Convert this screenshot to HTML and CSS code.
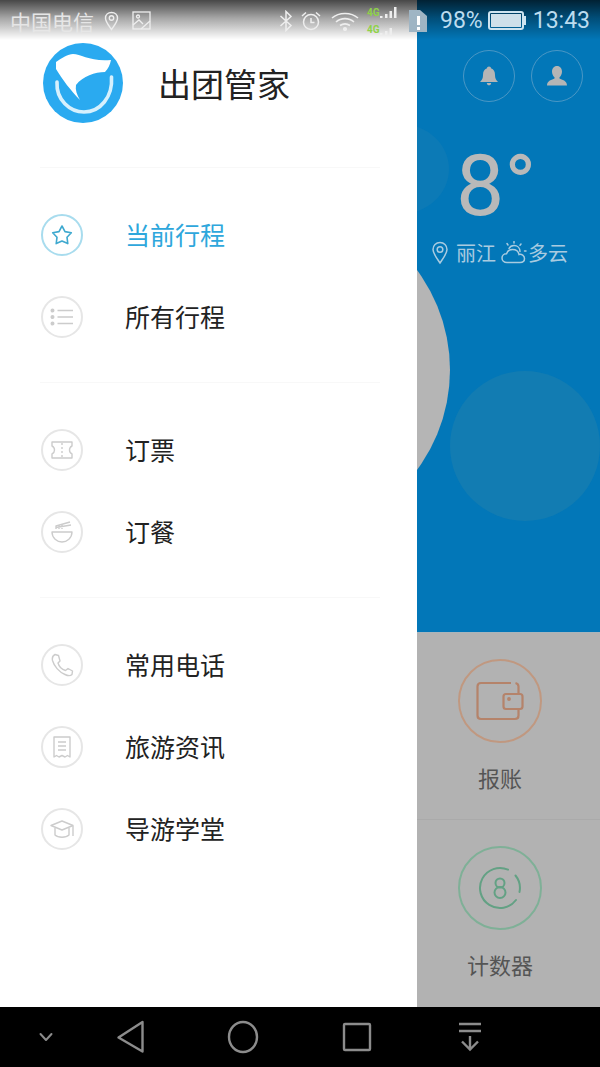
FILE: index.html
```html
<!DOCTYPE html>
<html lang="zh-CN">
<head>
    <meta charset="UTF-8">
    <title>出团管家</title>
    <link rel="stylesheet" href="styles.css">
</head>
<body>
    <div id="screen">
        <div id="main">
            <!-- drawer -->
            <div id="drawer">
                <div class="head">
                    <svg class="logo" width="80" height="80" viewBox="0 0 80 80">
                        <circle cx="40" cy="40" r="40" fill="#2aaaf0"/>
                        <path d="M13 19C19 15 25 11 30 11C38 11 48 19 68 17C67 22 65 26 62 29C52 29 40 33 33 42C32 47 34 52 37 57C28 48 19 36 13 26Z" fill="#fff"/>
                        <path d="M14 39C13 57 27 69 41 69C57 69 70 54 68.500 34" fill="none" stroke="#d6f0fd" stroke-width="3.600" stroke-linecap="round"/>
                    </svg>
                    <div class="title">出团管家</div>
                </div>
                <div class="group">
                    <div class="item active">
                        <span class="ico">
                            <svg width="24" height="24" viewBox="0 0 24 24" fill="none" stroke="#3fa9cf" stroke-width="1.6" stroke-linejoin="round"><path d="M12 3L15 8.6L21.3 9.8L17 14.3L17.8 20.6L12 18L6.200 20.6L7 14.3L2.700 9.800L9 8.600Z"/></svg>
                        </span>
                        <span class="name">当前行程</span>
                    </div>
                    <div class="item">
                        <span class="ico">
                            <svg width="24" height="24" viewBox="0 0 24 24" fill="none" stroke="#ccc" stroke-width="1.4"><path d="M7.500 5.500H23M7.500 12H23M7.500 18.500H23"/><circle cx="2.500" cy="5.500" r="1.300" fill="#ccc"/><circle cx="2.500" cy="12" r="1.300" fill="#ccc"/><circle cx="2.500" cy="18.500" r="1.300" fill="#ccc"/></svg>
                        </span>
                        <span class="name">所有行程</span>
                    </div>
                </div>
                <div class="group">
                    <div class="item">
                        <span class="ico">
                            <svg width="24" height="24" viewBox="0 0 24 24" fill="none" stroke="#ccc" stroke-width="1.4" stroke-linejoin="round"><path d="M2 4H22V8C20 9 19.500 11 19.500 12C19.500 13 20 15 22 16V20H2V16C4 15 4.500 13 4.500 12C4.500 11 4 9 2 8Z"/><path d="M12 5V19" stroke-dasharray="2 2"/></svg>
                        </span>
                        <span class="name">订票</span>
                    </div>
                    <div class="item">
                        <span class="ico">
                            <svg width="24" height="24" viewBox="0 0 24 24" fill="none" stroke="#ccc" stroke-width="1.4" stroke-linejoin="round"><path d="M2 12H22C22 18 17 22 12 22C7 22 2 18 2 12Z"/><path d="M6 9V6L20 2M9 9V5.500M12 9V5M6 7.500L21 5"/></svg>
                        </span>
                        <span class="name">订餐</span>
                    </div>
                </div>
                <div class="group last">
                    <div class="item">
                        <span class="ico">
                            <svg width="24" height="24" viewBox="0 0 24 24" fill="none" stroke="#ccc" stroke-width="1.4" stroke-linejoin="round"><path d="M5 1.500L8.500 2.500L10 8L8 10C9 13.500 12 16.500 15.500 17.500L18 15.500L22.500 18L22 21.500C20.500 23 18 23 15 21.500C9 19 4 13 2.500 7.500C2 5 3 2.500 5 1.500Z"/></svg>
                        </span>
                        <span class="name">常用电话</span>
                    </div>
                    <div class="item">
                        <span class="ico">
                            <svg width="24" height="24" viewBox="0 0 24 24" fill="none" stroke="#ccc" stroke-width="1.4" stroke-linejoin="round"><path d="M4 2H20V22L17.500 20.500L15 22L12 20.500L9 22L6.500 20.500L4 22Z"/><path d="M8 7H16M8 11H16M8 15H16"/></svg>
                        </span>
                        <span class="name">旅游资讯</span>
                    </div>
                    <div class="item">
                        <span class="ico">
                            <svg width="24" height="24" viewBox="0 0 24 24" fill="none" stroke="#ccc" stroke-width="1.4" stroke-linejoin="round"><path d="M12 4L23 8.500L12 13L1 8.500Z"/><path d="M5 11V18C8 21 16 21 19 18V11"/><path d="M23 9V19"/></svg>
                        </span>
                        <span class="name">导游学堂</span>
                    </div>
                </div>
            </div>
            <!-- page behind the drawer -->
            <div id="behind">
                <div class="top">
                    <span class="bubble b1"></span>
                    <span class="bubble b2"></span>
                    <span class="bubble b3"></span>
                    <div class="btns">
                        <span class="round">
                            <svg width="22" height="22" viewBox="0 0 22 22" fill="#b5b5b5"><path d="M11 1.500C12.200 1.500 13 2.300 13 3.300C15.800 4.200 17 6.500 17 10C17 13.500 18 15 20 17H2C4 15 5 13.500 5 10C5 6.500 6.200 4.200 9 3.300C9 2.300 9.800 1.500 11 1.500Z"/><path d="M8.800 18H13.200C13 19.500 12.200 20.300 11 20.300C9.800 20.300 9 19.500 8.800 18Z"/></svg>
                        </span>
                        <span class="round">
                            <svg width="24" height="24" viewBox="0 0 24 24" fill="#b5b5b5"><path d="M12 2C15.200 2 17 4.500 17 7.500C17 10 16 12 14.500 13.200V14.500C17 15.800 22 16.500 22 21.500H2C2 16.500 7 15.800 9.500 14.500V13.200C8 12 7 10 7 7.500C7 4.500 8.800 2 12 2Z"/></svg>
                        </span>
                    </div>
                    <div class="temp">8°</div>
                    <div class="weather">
                        <svg width="18" height="24" viewBox="0 0 18 24" fill="none" stroke="#a9cbe0" stroke-width="1.500"><path d="M9 22C5 16 2 12.500 2 8.500C2 4.500 5 1.500 9 1.500C13 1.500 16 4.500 16 8.500C16 12.500 13 16 9 22Z"/><circle cx="9" cy="8.500" r="2.800"/></svg>
                        <span>丽江</span>
                        <svg width="27" height="24" viewBox="0 0 27 24" fill="none" stroke="#a9cbe0" stroke-width="1.500" stroke-linecap="round"><path d="M6 21.500C3 21.500 1 19.500 1 17C1 14.500 3 12.800 5.500 12.800C6.500 9.800 9 8.500 11.500 8.500C15 8.500 17.500 10.500 18 13.500C20.500 12.800 23.500 14.500 23.500 17.500C23.500 20 21.500 21.500 19 21.500Z"/><path d="M8 7.500C9 5.500 11 4.500 13 4.500C16.500 4.500 19 7 19 10.500M13 0.500V2M20 3L19 4.200M25 10H23.500M6 2.500L7 4"/></svg>
                        <span>多云</span>
                    </div>
                </div>
                <div class="tools">
                    <div class="tool">
                        <span class="tool-ico orange">
                            <svg width="48" height="40" viewBox="0 0 48 40" fill="none" stroke="#b5836a" stroke-width="2.200"><path d="M35 2H5C2.800 2 1.500 3.300 1.500 5.500V34.500C1.500 36.700 2.800 38 5 38H39C41.200 38 42.500 36.700 42.500 34.500V28M42.500 12V5.500C42.500 4 41.500 2.500 39.500 2"/><rect x="27.500" y="13" width="19" height="15" rx="2.500"/><circle cx="33" cy="18" r="0.800" fill="#b5836a"/></svg>
                        </span>
                        <div class="tool-name">报账</div>
                    </div>
                    <div class="tool">
                        <span class="tool-ico green">
                            <svg width="44" height="44" viewBox="0 0 44 44" fill="none" stroke="#63a184" stroke-width="2"><path d="M30 3.700A20 20 0 1 0 38 34M37.500 9.500A20 20 0 0 1 41.500 26" stroke-linecap="round"/><circle cx="22" cy="17" r="4.500"/><circle cx="22" cy="26.500" r="5.500"/></svg>
                        </span>
                        <div class="tool-name">计数器</div>
                    </div>
                </div>
            </div>
        </div>
        <!-- nav bar -->
        <div id="nav">
            <svg width="16" height="10" viewBox="0 0 16 10" fill="none" stroke="#8c8c8c" stroke-width="2" stroke-linecap="round" stroke-linejoin="round"><path d="M2.500 2L8 8L13.500 2"/></svg>
            <svg class="back" width="30" height="34" viewBox="0 0 30 34" fill="none" stroke="#8c8c8c" stroke-width="2.400" stroke-linejoin="round"><path d="M26.500 2V31.500L2.500 17.500Z"/></svg>
            <svg class="home" width="32" height="34" viewBox="0 0 32 34" fill="none" stroke="#8c8c8c" stroke-width="2.400"><ellipse cx="16" cy="17" rx="14" ry="15"/></svg>
            <svg class="recent" width="30" height="30" viewBox="0 0 30 30" fill="none" stroke="#8c8c8c" stroke-width="2.400" stroke-linejoin="round"><rect x="2" y="2" width="26" height="26" rx="1"/></svg>
            <svg class="pull" width="24" height="30" viewBox="0 0 24 30" fill="none" stroke="#8c8c8c" stroke-width="2.400"><path d="M1 2H23M1 9H23M12 14V27M4 19.500L12 27.500L20 19.500"/></svg>
        </div>
        <!-- status bar lies over the page -->
        <div id="status">
            <div class="side">
                <span class="carrier">中国电信</span>
                <svg width="15" height="20" viewBox="0 0 15 20" fill="none" stroke="#eee" stroke-width="1.400"><path d="M7.500 18.500C4 13.500 1.500 10.500 1.500 7.200C1.500 3.800 4 1.500 7.500 1.500C11 1.500 13.500 3.800 13.500 7.200C13.500 10.500 11 13.500 7.500 18.500Z"/><circle cx="7.500" cy="7" r="2.200"/></svg>
                <svg class="pic" width="19" height="19" viewBox="0 0 19 19" fill="none" stroke="#eee" stroke-width="1.300"><rect x="1" y="1" width="17" height="17"/><path d="M1 14L7 9L11 13M9 18L18 10"/><circle cx="6" cy="5.500" r="1.500"/></svg>
            </div>
            <div class="side">
                <svg width="14" height="22" viewBox="0 0 14 22" fill="none" stroke="#eee" stroke-width="1.500"><path d="M1.500 6L12 15.500L7 20.500V1.500L12 6.500L1.500 16"/></svg>
                <svg class="alarm" width="20" height="20" viewBox="0 0 20 20" fill="none" stroke="#eee" stroke-width="1.500"><circle cx="10" cy="11" r="7.500"/><path d="M10 7V11.500H13.500M1 5L5 1.500M19 5L15 1.500"/></svg>
                <svg class="wifi" width="28" height="20" viewBox="0 0 28 20" fill="none" stroke="#eee" stroke-width="1.600"><path d="M1 7C8 1 20 1 27 7M5 11C10 6.500 18 6.500 23 11M9 14.500C12 12.500 16 12.500 19 14.500"/><circle cx="14" cy="18" r="1.300" fill="#eee"/></svg>
                <span class="signal">
                    <span class="net">4G</span>
                    <span class="net low">4G</span>
                    <svg width="18" height="32" viewBox="0 0 18 32" fill="#eee"><rect x="0" y="11" width="2.500" height="2"/><rect x="5" y="9" width="2.500" height="4"/><rect x="9.500" y="6" width="2.500" height="7"/><rect x="14" y="2" width="2.500" height="11"/><rect x="0" y="28" width="2.500" height="2"/><rect x="5" y="26" width="2.500" height="4"/><rect x="9.500" y="23" width="2.500" height="7"/></svg>
                </span>
                <svg class="sim" width="20" height="24" viewBox="0 0 20 24"><path d="M1 1H12L19 7V23H1Z" fill="#9fb5c4"/><rect x="9" y="7" width="3" height="9" fill="#fff"/><rect x="9" y="18" width="3" height="3" fill="#fff"/></svg>
                <span class="pct">98%</span>
                <span class="batt"><i></i></span>
                <span class="time">13:43</span>
            </div>
        </div>
    </div>
</body>
</html>
```

FILE: styles.css
```css
*{
    margin: 0;
    padding: 0;
    box-sizing: border-box;
}
body{
    width: 600px;
    height: 1067px;
    overflow: hidden;
    font-family: "Noto Sans CJK SC", "Liberation Sans", sans-serif;
}
svg{
    display: block;
    flex: none;
}
#screen{
    width: 600px;
    height: 1067px;
    position: relative;
    display: flex;
    flex-direction: column;
    overflow: hidden;
}
#main{
    height: 1007px;
    display: flex;
}

/* drawer */
#drawer{
    width: 417px;
    flex: none;
    background: #fff;
    position: relative;
    z-index: 1;
}
.head{
    height: 168px;
    padding: 43px 0 0 3px;
    display: flex;
    align-items: flex-start;
    margin: 0 37px 0 40px;
    border-bottom: 1px solid #f8f8f8;
}
.title{
    margin-left: 35px;
    height: 80px;
    line-height: 80px;
    font-size: 33px;
    color: #222;
}
.group{
    padding: 26px 0 24px 1px;
    margin: 0 37px 0 40px;
    border-bottom: 1px solid #f8f8f8;
}
.group.last{
    border-bottom: 0;
}
.item{
    height: 82px;
    display: flex;
    align-items: center;
}
.ico{
    width: 42px;
    height: 42px;
    border: 2px solid #e6e6e6;
    border-radius: 50%;
    display: flex;
    align-items: center;
    justify-content: center;
    margin-right: 42px;
}
.name{
    font-size: 25px;
    margin-top: -2px;
    color: #222;
}
.item.active .ico{
    border-color: #a8dcee;
}
.item.active .name{
    color: #2ea7dc;
}

/* page behind */
#behind{
    flex: 1;
    display: flex;
    flex-direction: column;
}
.top{
    height: 632px;
    flex: none;
    background: #0277b8;
    position: relative;
    overflow: hidden;
    padding-top: 50px;
}
.bubble{
    position: absolute;
    border-radius: 50%;
}
.b1{
    left: -65px;
    top: 124px;
    width: 97px;
    height: 90px;
    background: #0c7ab6;
}
.b2{
    left: -303px;
    top: 202px;
    width: 336px;
    height: 336px;
    background: #b5b5b5;
}
.b3{
    left: 33px;
    top: 371px;
    width: 150px;
    height: 150px;
    background: #127cb2;
}
.btns{
    display: flex;
    gap: 16px;
    padding-left: 46px;
    position: relative;
}
.round{
    width: 52px;
    height: 52px;
    border: 1px solid #4a97c5;
    border-radius: 50%;
    display: flex;
    align-items: center;
    justify-content: center;
}
.temp{
    position: relative;
    margin: 42px 0 0 39px;
    height: 84px;
    line-height: 84px;
    font-family: Roboto, "Liberation Sans", sans-serif;
    font-size: 86px;
    font-weight: 400;
    color: #b9b9b9;
}
.weather{
    position: relative;
    display: flex;
    align-items: center;
    margin: 11px 0 0 14px;
    font-size: 20px;
    line-height: 28px;
    color: #a9cbe0;
}
.weather span{
    margin-left: 7px;
}
.weather svg + span + svg{
    margin-left: 5px;
}
.weather svg + span + svg + span{
    margin-left: 0;
}
.tools{
    flex: 1;
    background: #b2b2b2;
    border-top: 1px solid #a9b5bc;
}
.tool{
    height: 187px;
    padding: 26px 17px 0 0;
    display: flex;
    flex-direction: column;
    align-items: center;
    border-bottom: 1px solid #aaa;
}
.tool:last-child{
    border-bottom: 0;
}
.tool-ico{
    width: 84px;
    height: 84px;
    border-radius: 50%;
    display: flex;
    align-items: center;
    justify-content: center;
}
.orange{
    border: 2px solid #c09880;
}
.green{
    border: 2px solid #7fb097;
}
.tool-name{
    margin-top: 18px;
    font-size: 22px;
    line-height: 32px;
    color: #555;
}

/* nav bar */
#nav{
    flex: 1;
    background: #000;
    display: flex;
    align-items: center;
    padding-left: 38px;
}
.back{
    margin-left: 62px;
}
.home{
    margin-left: 81px;
}
.recent{
    margin-left: 83px;
}
.pull{
    margin-left: 86px;
}

/* status bar */
#status{
    position: absolute;
    left: 0;
    top: 0;
    width: 600px;
    height: 40px;
    padding: 1px 10px 0 10px;
    display: flex;
    justify-content: space-between;
    align-items: center;
    background: linear-gradient(rgba(0,0,0,.72), rgba(0,0,0,.35) 45%, rgba(0,0,0,0));
    z-index: 2;
    color: #dfe9ef;
}
.side{
    display: flex;
    align-items: center;
}
.carrier{
    font-size: 21px;
    width: 86px;
    line-height: 30px;
    margin-right: 8px;
    color: #e6e6e6;
}
.pic{
    margin-left: 13px;
}
.alarm{
    margin-left: 8px;
}
.wifi{
    margin-left: 10px;
}
.signal{
    position: relative;
    width: 34px;
    height: 34px;
    margin-left: 8px;
}
.signal svg{
    position: absolute;
    right: 3px;
    top: 1px;
}
.net{
    position: absolute;
    left: 0;
    top: 3px;
    font-family: Roboto, sans-serif;
    font-size: 10px;
    line-height: 12px;
    font-weight: 700;
    color: #8fd14a;
}
.net.low{
    top: 20px;
}
.sim{
    margin-left: 7px;
}
.pct{
    margin-left: 12px;
    font-family: Roboto, sans-serif;
    font-size: 23px;
    color: #bcdcef;
}
.batt{
    width: 36px;
    height: 19px;
    margin-left: 5px;
    border: 2px solid #cfe4f0;
    border-radius: 3px;
    padding: 1px;
    display: block;
    position: relative;
}
.batt i{
    display: block;
    height: 100%;
    background: #cfe0ea;
}
.batt::after{
    content: "";
    position: absolute;
    right: -4px;
    top: 3px;
    width: 2px;
    height: 9px;
    background: #cfe4f0;
}
.time{
    margin-left: 9px;
    font-family: Roboto, sans-serif;
    font-size: 23px;
    color: #bcdcef;
}
```
